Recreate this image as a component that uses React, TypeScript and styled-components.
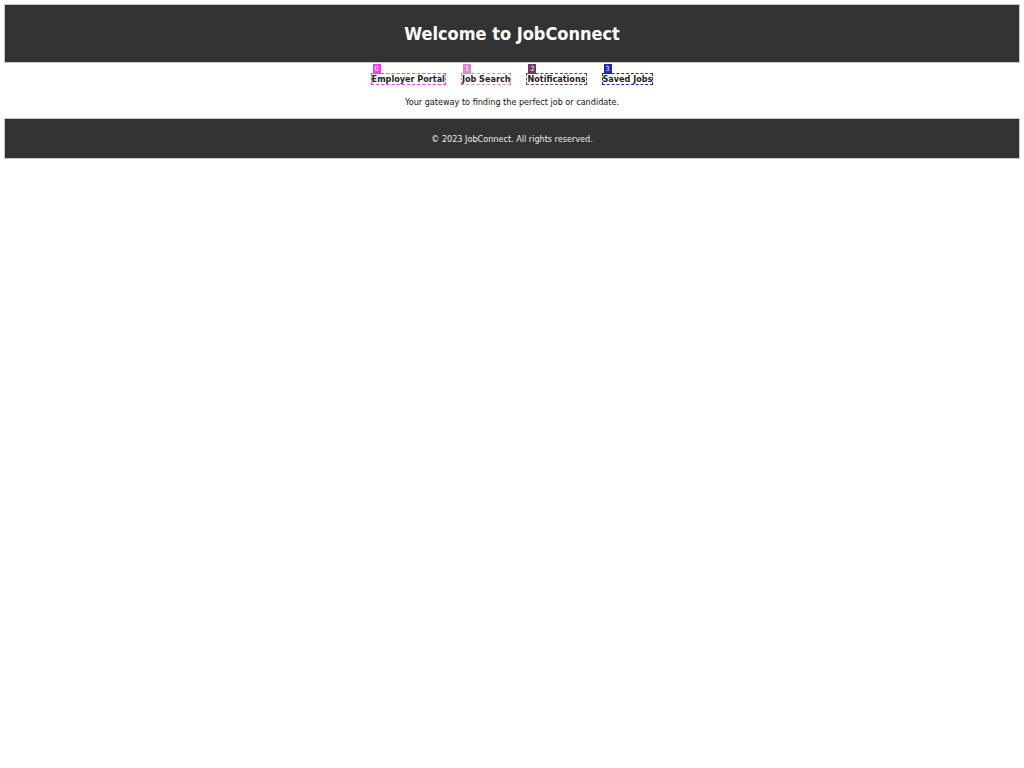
import React from "react";
import styled, { createGlobalStyle } from "styled-components";

const Global = createGlobalStyle`
  html, body { background: #fff; }
  body {
    margin: 4px;
    font-family: "DejaVu Sans", Verdana, sans-serif;
    font-stretch: condensed;
    color: #222;
  }
`;

const Header = styled.header`
  background: #333;
  border: 1px solid #c8c8c8;
  height: 57px;
  display: flex;
  align-items: center;
  justify-content: center;
`;

const Title = styled.h1`
  margin: 0;
  color: #fff;
  font-size: 18px;
  font-weight: bold;
`;

const Nav = styled.nav`
  display: flex;
  justify-content: center;
  gap: 15px;
  margin-top: 10px;
`;

const NavLink = styled.a<{ $c: string }>`
  position: relative;
  display: block;
  font-size: 9px;
  font-weight: bold;
  line-height: 10px;
  color: #222;
  text-decoration: none;
  border: 1px dashed ${(p) => p.$c};
`;

const Badge = styled.span<{ $c: string }>`
  position: absolute;
  left: 1px;
  bottom: 100%;
  background: ${(p) => p.$c};
  color: #fff;
  font-size: 7px;
  font-weight: normal;
  line-height: 10px;
  padding: 0 2px;
`;

const Tagline = styled.p`
  margin: 11px 0 0;
  text-align: center;
  font-size: 9px;
  line-height: 12px;
  color: #111;
`;

const Footer = styled.footer`
  margin-top: 10px;
  background: #333;
  border: 1px solid #c8c8c8;
  height: 39px;
  display: flex;
  align-items: center;
  justify-content: center;
  color: #eee;
  font-size: 9px;
`;

const links = [
  { label: "Employer Portal", c: "#f03cf0" },
  { label: "Job Search", c: "#d98ac8" },
  { label: "Notifications", c: "#6e3c62" },
  { label: "Saved Jobs", c: "#2424c0" },
];

export default function App() {
  return (
    <>
      <Global />
      <Header>
        <Title>Welcome to JobConnect</Title>
      </Header>
      <Nav>
        {links.map((l, i) => (
          <NavLink key={l.label} href="#" $c={l.c}>
            <Badge $c={l.c}>{i}</Badge>
            {l.label}
          </NavLink>
        ))}
      </Nav>
      <Tagline>Your gateway to finding the perfect job or candidate.</Tagline>
      <Footer>© 2023 JobConnect. All rights reserved.</Footer>
    </>
  );
}
